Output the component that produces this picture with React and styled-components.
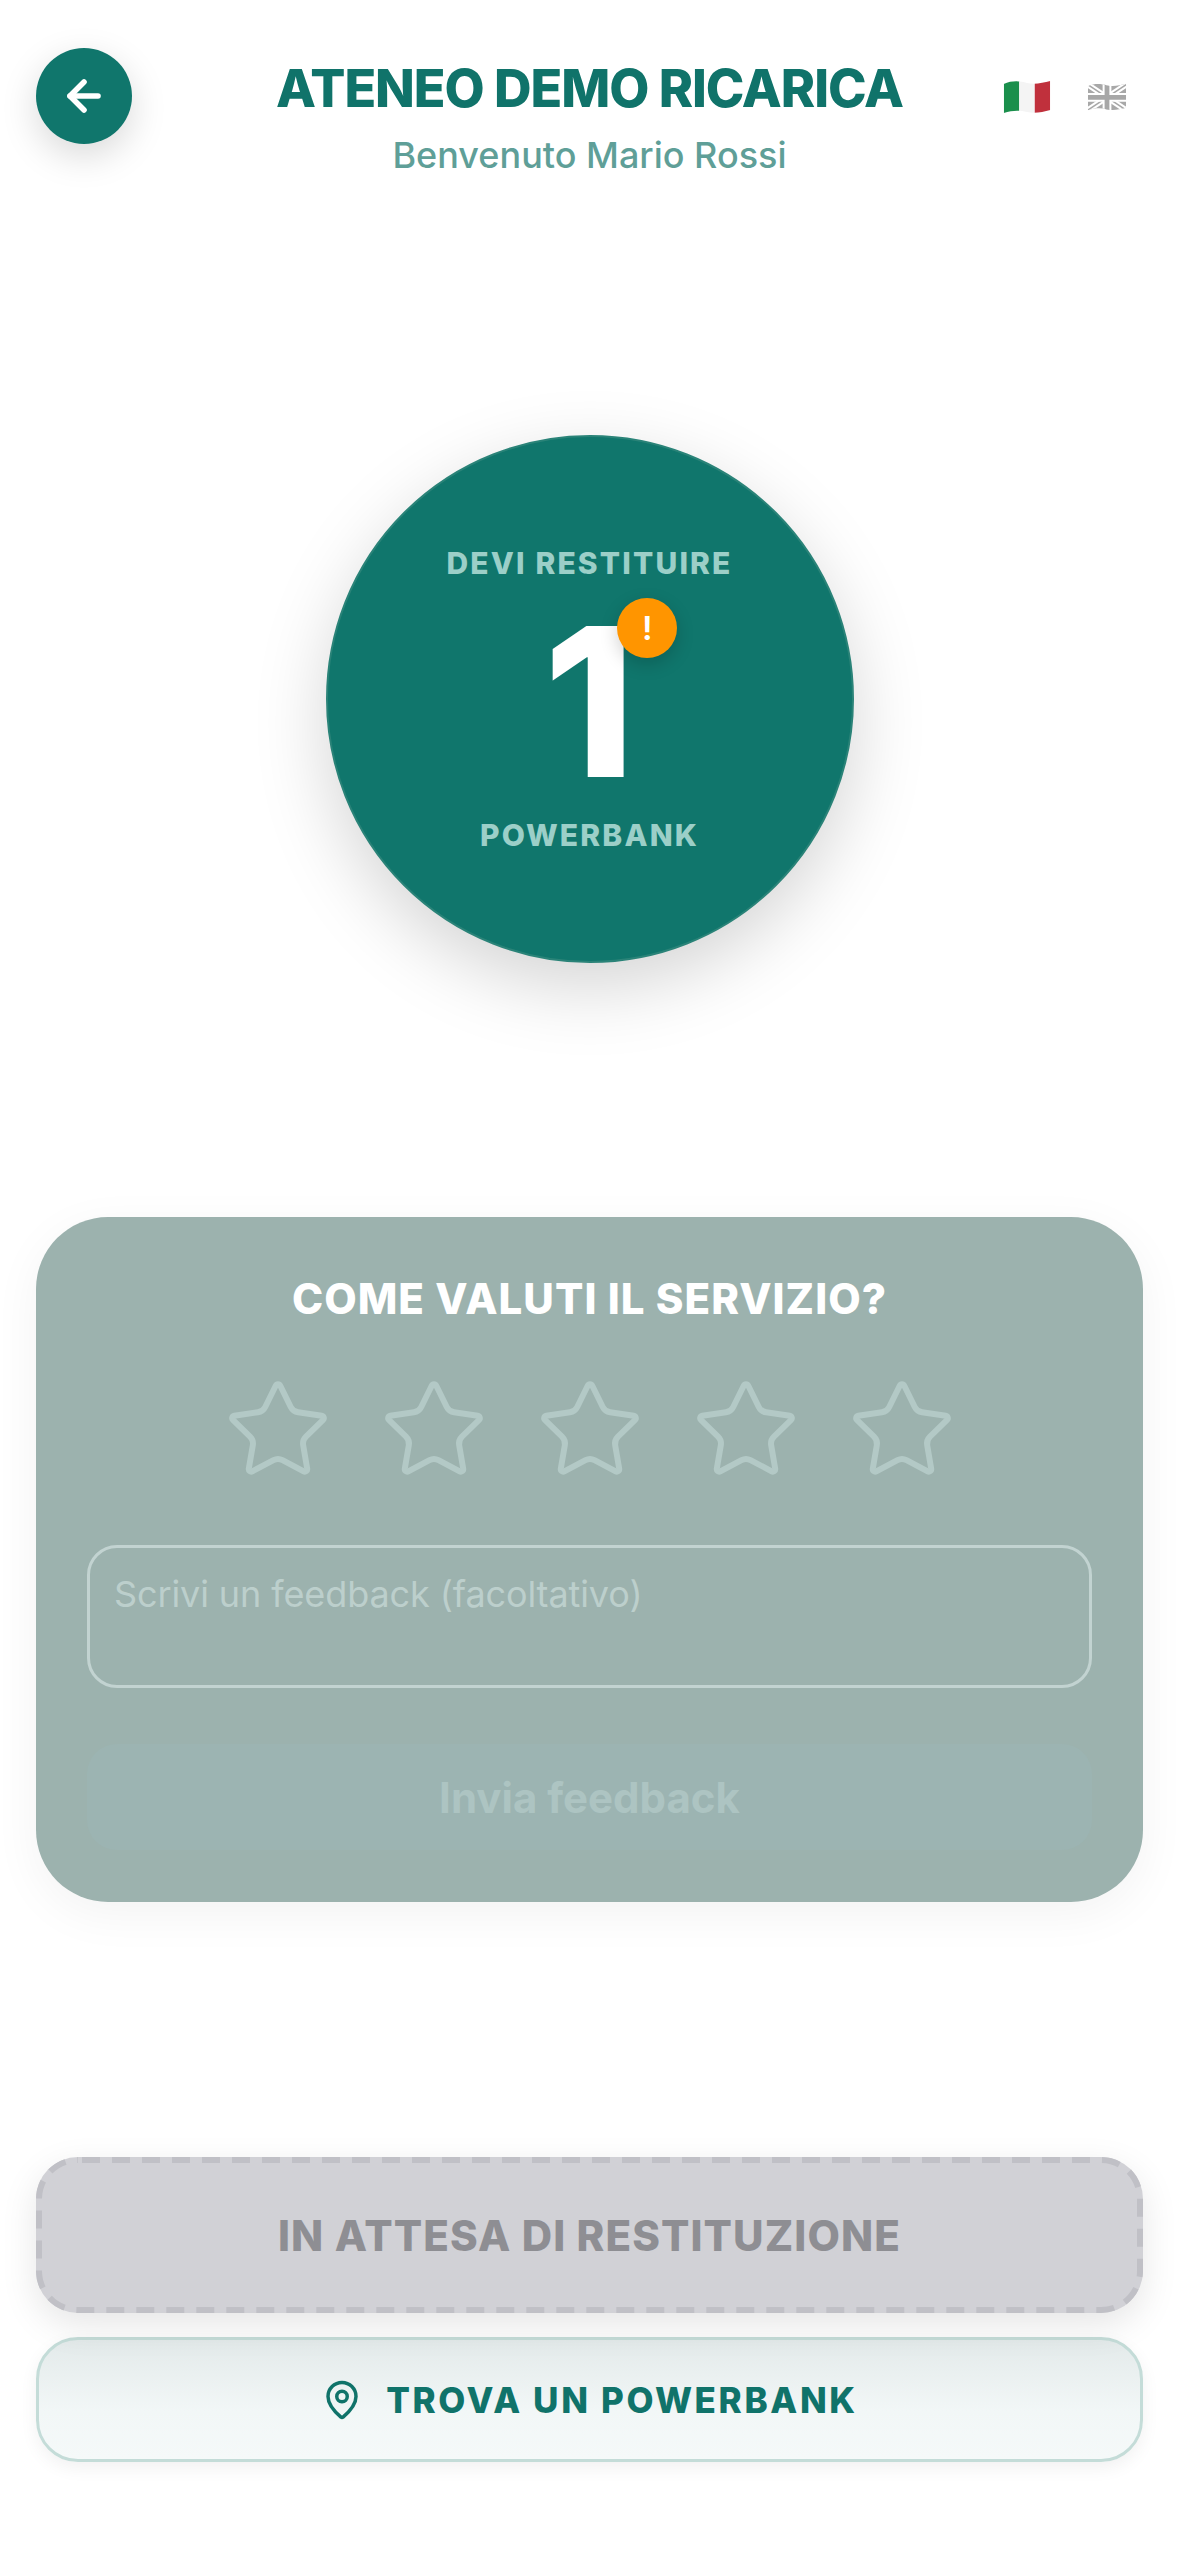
import styled, { createGlobalStyle } from 'styled-components';
import { ArrowLeft, MapPin, Star } from 'lucide-react';

const GlobalStyle = createGlobalStyle`
  html, body {
    margin: 0;
    padding: 0;
    background: #fff;
  }

  * {
    box-sizing: border-box;
  }
`;

const Page = styled.main`
  width: 1179px;
  height: 2556px;
  padding: 48px 36px 0;
  display: flex;
  flex-direction: column;
  overflow: hidden;
  font-family: Inter, "Liberation Sans", sans-serif;
`;

const Header = styled.header`
  display: grid;
  grid-template-columns: 1fr auto 1fr;
  align-items: start;
`;

const BackButton = styled.button`
  width: 96px;
  height: 96px;
  padding: 0;
  border: none;
  border-radius: 50%;
  display: flex;
  align-items: center;
  justify-content: center;
  color: #fff;
  background: #10766c;
  box-shadow: 0 12px 36px rgba(0, 0, 0, 0.15);
`;

const Titles = styled.div`
  padding-top: 9px;
  display: flex;
  flex-direction: column;
  align-items: center;
`;

const Title = styled.h1`
  margin: 0;
  font-size: 52px;
  line-height: 63px;
  font-weight: 800;
  letter-spacing: -1.05px;
  color: #10736a;
`;

const Subtitle = styled.p`
  margin: 13px 0 0;
  font-size: 36px;
  line-height: 44px;
  font-weight: 500;
  color: #5f9f98;
`;

const Flags = styled.div`
  padding: 32px 16px 0 0;
  display: flex;
  align-items: center;
  justify-content: flex-end;
  gap: 36px;
`;

const FlagImage = styled.svg`
  display: block;
  width: ${(props) => (props.$active ? '48px' : '40px')};
  height: ${(props) => (props.$active ? '34px' : '28px')};
  filter: ${(props) => (props.$active ? 'none' : 'grayscale(1)')};
  opacity: ${(props) => (props.$active ? 1 : 0.45)};
`;

const Hero = styled.section`
  margin-top: 258px;
  display: flex;
  justify-content: center;
`;

const Counter = styled.div`
  position: relative;
  width: 528px;
  height: 528px;
  border: 2px solid #2a8378;
  border-radius: 50%;
  display: flex;
  flex-direction: column;
  align-items: center;
  color: #fff;
  background: #10766c;
  box-shadow: 0 24px 72px rgba(0, 0, 0, 0.17);
`;

const CounterLabel = styled.span`
  font-size: 30px;
  line-height: 36px;
  font-weight: 800;
  letter-spacing: 2.15px;
  color: #9ccfc8;
  margin-top: ${(props) => props.$top}px;
`;

const CounterValue = styled.div`
  position: relative;
  margin-top: 18px;
  height: 204px;
  font-size: 208px;
  line-height: 204px;
  font-weight: 800;
`;

const Badge = styled.span`
  position: absolute;
  top: -1px;
  right: -42px;
  width: 60px;
  height: 60px;
  border-radius: 50%;
  display: flex;
  align-items: center;
  justify-content: center;
  font-size: 33px;
  line-height: 1;
  font-weight: 600;
  color: #fff;
  background: #ff9500;
  box-shadow: 0 6px 18px rgba(0, 0, 0, 0.18);
`;

const FeedbackCard = styled.section`
  margin-top: 254px;
  height: 685px;
  padding: 58px 51px 0;
  border-radius: 72px;
  display: flex;
  flex-direction: column;
  align-items: stretch;
  background: #9cb2ae;
  box-shadow: 0 12px 48px rgba(0, 0, 0, 0.05);
`;

const CardTitle = styled.h2`
  margin: 0;
  text-align: center;
  font-size: 42px;
  line-height: 48px;
  font-weight: 800;
  letter-spacing: 1.05px;
  color: #fff;
`;

const Stars = styled.div`
  margin-top: 52px;
  display: flex;
  justify-content: center;
  gap: 46px;
`;

const StarIcon = styled(Star)`
  display: block;
  color: #b3c9c6;
`;

const FeedbackInput = styled.textarea`
  margin-top: 60px;
  width: 100%;
  height: 143px;
  padding: 26px 24px;
  border: 3px solid #c2d3d1;
  border-radius: 30px;
  outline: none;
  resize: none;
  display: block;
  font-family: inherit;
  font-size: 36px;
  line-height: 41px;
  letter-spacing: -0.1px;
  background: transparent;

  &::placeholder {
    color: #bccfcc;
    opacity: 1;
  }
`;

const SendButton = styled.button`
  margin-top: 56px;
  height: 106px;
  border: none;
  border-radius: 30px;
  font-family: inherit;
  font-size: 42px;
  font-weight: 700;
  color: #adc4c2;
  background: #9cb4b2;
`;

const Actions = styled.div`
  margin-top: 255px;
  display: flex;
  flex-direction: column;
  gap: 24px;
`;

const WaitingButton = styled.button`
  position: relative;
  height: 156px;
  border: none;
  border-radius: 42px;
  font-family: inherit;
  font-size: 42px;
  font-weight: 800;
  letter-spacing: 1.1px;
  color: #8e8e93;
  background: #d1d1d6;
  box-shadow: 0 12px 36px rgba(0, 0, 0, 0.1);
`;

const DashedFrame = styled.svg`
  position: absolute;
  top: 0;
  left: 0;
`;

const FindButton = styled.button`
  height: 125px;
  border: 3px solid #c4dcd8;
  border-radius: 42px;
  display: flex;
  align-items: center;
  justify-content: center;
  gap: 23px;
  font-family: inherit;
  font-size: 35px;
  font-weight: 800;
  letter-spacing: 2.65px;
  color: #10736a;
  background: linear-gradient(180deg, #e3eaea 0%, #f2f7f7 60%, #f5f9f9 100%);
  box-shadow: 0 6px 18px rgba(0, 0, 0, 0.06);
`;

const wave = 'M0 4 C9 0 17 1 24 3 C32 5 40 3 48 1 L48 31 C40 33 32 35 24 33 C17 31 9 31 0 34 Z';

function ItalianFlag() {
  return (
    <FlagImage $active viewBox="0 0 48 35">
      <clipPath id="flag-it">
        <path d={wave} />
      </clipPath>
      <g clipPath="url(#flag-it)">
        <rect width="16" height="36" fill="#1a8f4c" />
        <rect x="16" width="16" height="36" fill="#f4f4f4" />
        <rect x="32" width="16" height="36" fill="#c0303c" />
      </g>
    </FlagImage>
  );
}

function BritishFlag() {
  return (
    <FlagImage viewBox="0 0 48 35">
      <clipPath id="flag-uk">
        <path d={wave} />
      </clipPath>
      <g clipPath="url(#flag-uk)">
        <rect width="48" height="36" fill="#24408e" />
        <path d="M0 2 L48 34 M48 2 L0 34" stroke="#fff" strokeWidth="7" />
        <path d="M0 2 L48 34 M48 2 L0 34" stroke="#cf142b" strokeWidth="2" />
        <path d="M24 0 V36 M0 18 H48" stroke="#fff" strokeWidth="11" />
        <path d="M24 0 V36 M0 18 H48" stroke="#cf142b" strokeWidth="6" />
      </g>
    </FlagImage>
  );
}

export default function App() {
  return (
    <>
      <GlobalStyle />
      <Page>
        <Header>
          <div>
            <BackButton aria-label="Indietro">
              <ArrowLeft size={48} strokeWidth={2.8} />
            </BackButton>
          </div>
          <Titles>
            <Title>ATENEO DEMO RICARICA</Title>
            <Subtitle>Benvenuto Mario Rossi</Subtitle>
          </Titles>
          <Flags>
            <ItalianFlag />
            <BritishFlag />
          </Flags>
        </Header>

        <Hero>
          <Counter>
            <CounterLabel $top={108}>DEVI RESTITUIRE</CounterLabel>
            <CounterValue>
              1
              <Badge>!</Badge>
            </CounterValue>
            <CounterLabel $top={14}>POWERBANK</CounterLabel>
          </Counter>
        </Hero>

        <FeedbackCard>
          <CardTitle>COME VALUTI IL SERVIZIO?</CardTitle>
          <Stars>
            {[1, 2, 3, 4, 5].map((value) => (
              <StarIcon key={value} size={110} strokeWidth={1.3} />
            ))}
          </Stars>
          <FeedbackInput placeholder="Scrivi un feedback (facoltativo)" />
          <SendButton>Invia feedback</SendButton>
        </FeedbackCard>

        <Actions>
          <WaitingButton>
            <DashedFrame width="1107" height="156" fill="none">
              <rect
                x="3"
                y="3"
                width="1101"
                height="150"
                rx="39"
                stroke="#c0c0c6"
                strokeWidth="6"
                strokeDasharray="18 12"
                strokeDashoffset="26"
              />
            </DashedFrame>
            IN ATTESA DI RESTITUZIONE
          </WaitingButton>
          <FindButton>
            <MapPin size={42} strokeWidth={2} />
            TROVA UN POWERBANK
          </FindButton>
        </Actions>
      </Page>
    </>
  );
}
